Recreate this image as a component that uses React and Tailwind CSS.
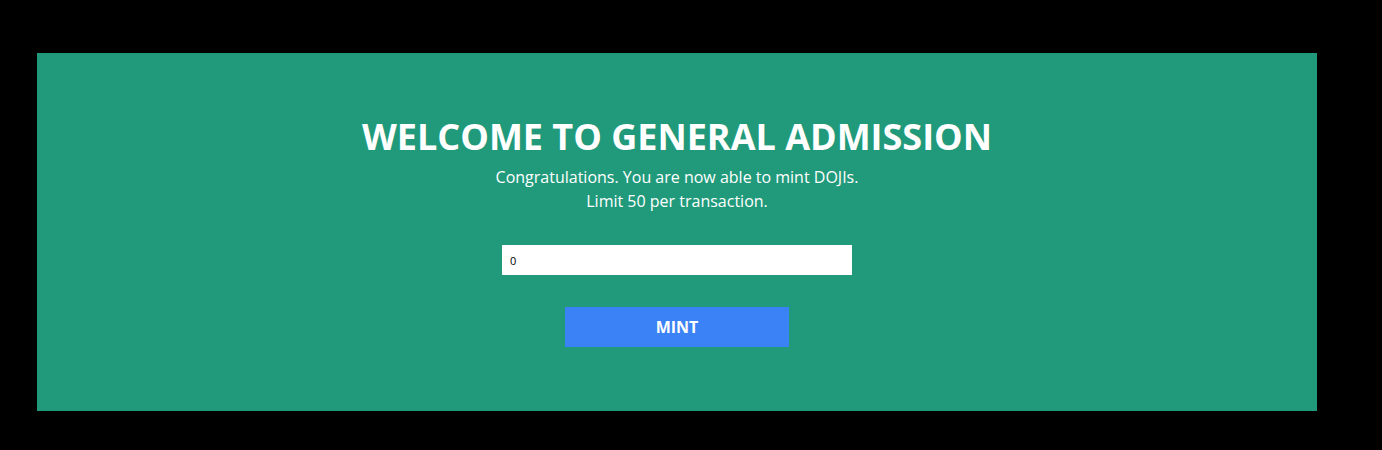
export default function App() {
  return (
    <div className="min-h-[450px] bg-black pt-[53px] pl-[37px]" style={{ fontFamily: '"Open Sans", sans-serif' }}>
      <div className="w-[1280px] h-[358px] bg-[#219a7b] flex flex-col items-center text-white">
        <h1 className="mt-[64px] text-[36px] leading-[40px] font-bold">WELCOME TO GENERAL ADMISSION</h1>
        <p className="mt-[8px] text-[16px] leading-[24px]">Congratulations. You are now able to mint DOJIs.</p>
        <p className="text-[16px] leading-[24px]">Limit 50 per transaction.</p>
        <input
          type="number"
          defaultValue={0}
          className="mt-[32px] w-[350px] h-[30px] bg-white text-black text-[11px] px-[8px] outline-none"
        />
        <button className="mt-[32px] w-[224px] h-[40px] bg-[#3b82f6] text-white text-[16px] font-bold">
          MINT
        </button>
      </div>
    </div>
  );
}
